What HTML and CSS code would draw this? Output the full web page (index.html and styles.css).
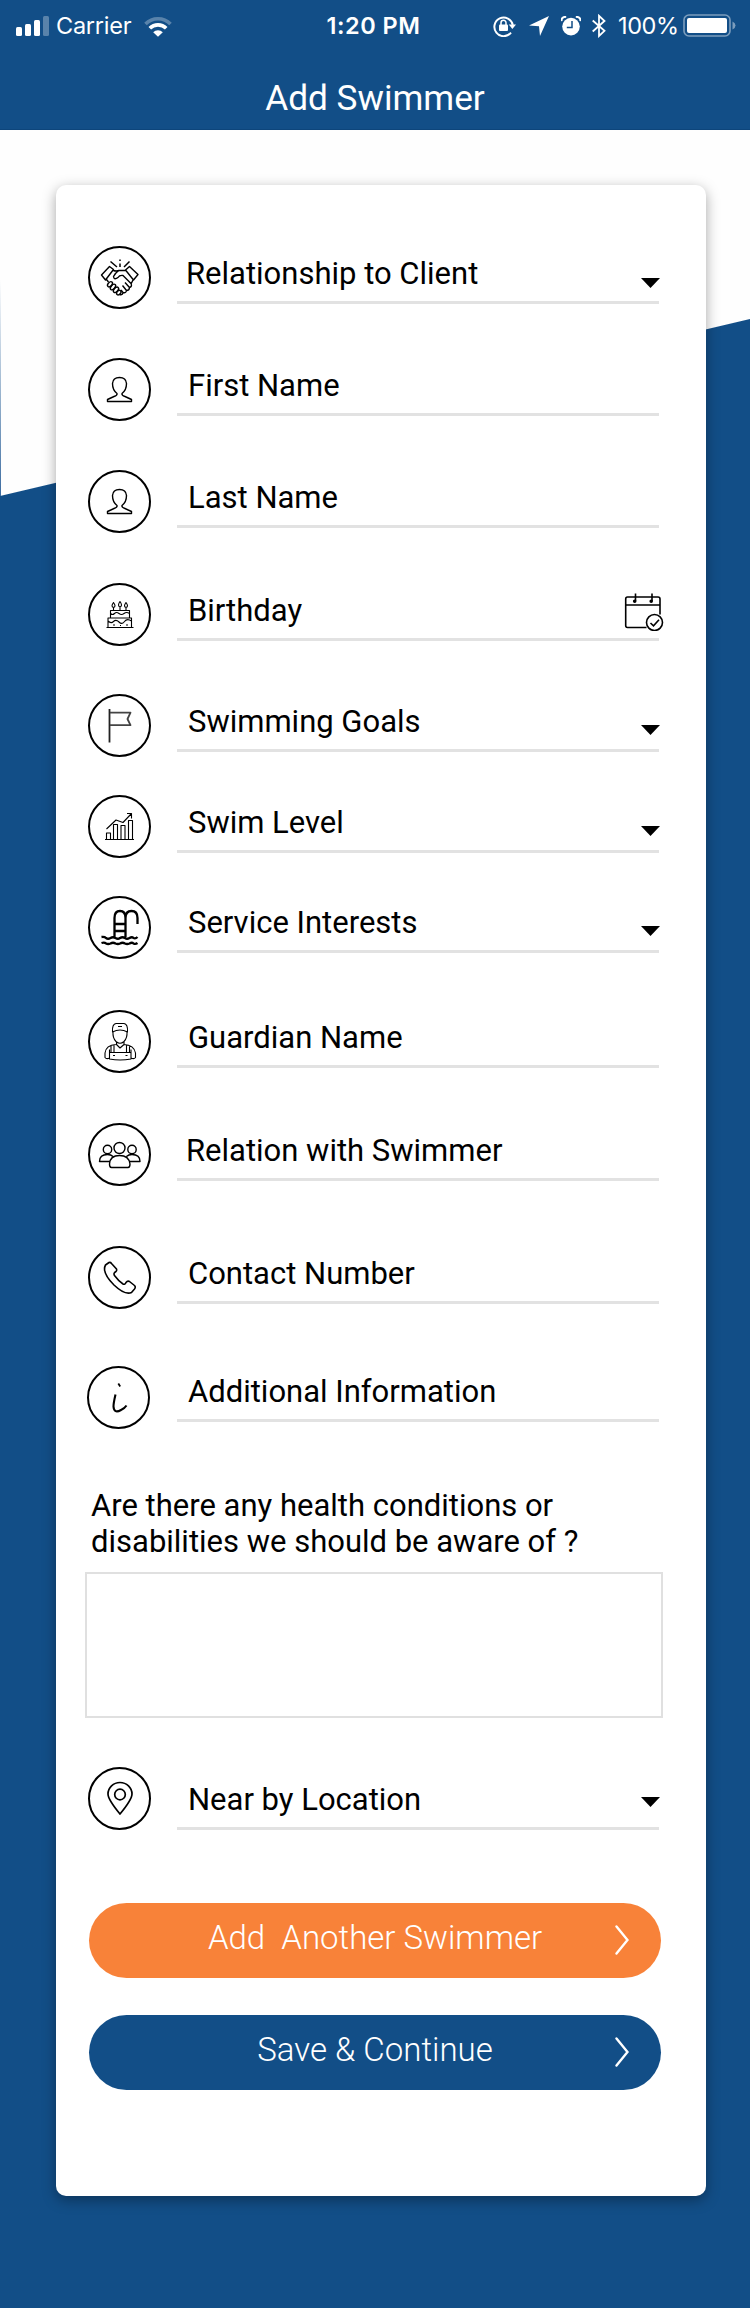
FILE: index.html
```html
<!DOCTYPE html>
<html lang="en">
<head>
<meta charset="utf-8">
<title>Add Swimmer</title>
<link rel="stylesheet" href="styles.css">
</head>
<body>
<div class="screen">
  <header class="header">
    <div class="status">
      <div class="status-left">
        <svg class="signal" width="34" height="20" viewBox="0 0 34 20" fill="#fff"><rect x="0" y="11" width="6" height="9" rx="1.5"/><rect x="9" y="8" width="6" height="12" rx="1.5"/><rect x="18" y="4" width="6" height="16" rx="1.5"/><rect x="27" y="0" width="6" height="20" rx="1.5" opacity=".3"/></svg>
        <span class="carrier">Carrier</span>
        <svg class="wifi" width="28" height="21" viewBox="0 0 28 21" fill="none" stroke="#fff" stroke-width="3.6"><path d="M1.5 8A17.5 17.5 0 0 1 26.500 8" opacity=".3"/><path d="M5.800 12.300A11.500 11.500 0 0 1 22.200 12.300"/><path d="M9.200 16.200A6.800 6.800 0 0 1 18.800 16.200L14 20.800Z" fill="#fff" stroke="none"/></svg>
      </div>
      <span class="clock">1:20 PM</span>
      <div class="status-right">
        <svg width="24" height="22" viewBox="0 0 24 22" fill="none" stroke="#fff" stroke-width="2"><path d="M18 17.600A9.300 9.300 0 1 1 19.800 10"/><path d="M15.800 9.500H23L19.400 14Z" fill="#fff" stroke="none"/><rect x="6" y="9.500" width="9" height="6.500" rx="1" fill="#fff" stroke="none"/><path d="M8 10V7.800a2.500 2.500 0 0 1 5 0V10" stroke-width="1.500"/></svg>
        <svg class="nav-arrow" width="20" height="20" viewBox="0 0 20 20" fill="#fff"><path d="M20 0L11 20L10 10.200L0 9.500Z"/></svg>
        <svg class="alarm" width="20" height="20" viewBox="0 0 20 20" fill="#fff"><circle cx="10" cy="10.600" r="8.800"/><path d="M.600 5.200Q0 1 5.200 .700M14.800 .700Q20 1 19.400 5.200" fill="none" stroke="#fff" stroke-width="2"/><path d="M11 5V11.400H5.800" fill="none" stroke="#124e87" stroke-width="1.500"/></svg>
        <svg class="bluetooth" width="14" height="24" viewBox="0 0 14 24" fill="none" stroke="#fff" stroke-width="1.800"><path d="M.700 6.500L12.500 16.800L7 22V1.800L12.500 7L.700 17.500"/></svg>
        <span class="percent">100%</span>
        <svg class="battery" width="53" height="24" viewBox="0 0 53 24"><rect x="1" y="1" width="46" height="21" rx="5" fill="none" stroke="#fff" stroke-width="1.600" opacity=".45"/><rect x="4" y="4" width="40" height="15" rx="2" fill="#fff"/><path d="M49.500 7.500Q52.500 9 52.500 11.500T49.500 15.500Z" fill="#fff" opacity=".45"/></svg>
      </div>
    </div>
    <h1 class="title">Add Swimmer</h1>
  </header>

  <main class="stage">
    <form class="card">
      <div class="row row-relationship">
        <span class="badge"><svg viewBox="0 0 63 63"><path d="M13.500 29L21.500 20.500L25.500 23.500L17.500 34ZM50 28.500L41.500 20.500L37.500 24L45.500 34ZM25.500 24.500Q28 25.500 31 24.500H37.500M18.500 33.500L20.500 36M45 34L43 38M31 24.500Q27.500 26.500 25.500 30.500Q26 34.500 30 31.500Q31.500 29 35 29.500L43 37.500Q44.500 40.500 41.500 41.500L37 36.500M41.500 41.500Q41.500 44.500 38.500 44.500L34.500 39.500M38.500 44.500Q38 47.500 35 46.500L33 44M35 47Q34 49.500 31.500 48.500"/><g><ellipse cx="22" cy="38.300" rx="1.900" ry="3" transform="rotate(42 22 38.300)"/><ellipse cx="25" cy="41" rx="1.900" ry="3.300" transform="rotate(42 25 41)"/><ellipse cx="28" cy="43.800" rx="1.900" ry="3.200" transform="rotate(42 28 43.800)"/><ellipse cx="30.800" cy="46.600" rx="1.800" ry="2.600" transform="rotate(42 30.800 46.600)"/></g><path d="M22.500 15.500L29 21M41.500 15.500L36 21M32 17.500V21M32 13.500V15" stroke-width="1.500"/></svg></span>
        <div class="field"><span class="label">Relationship to Client</span><i class="caret"></i></div>
      </div>
      <div class="row row-first">
        <span class="badge"><svg viewBox="0 0 63 63"><path d="M29 35.500Q24.500 32 24.500 25.500Q25 19.500 31.500 19.500T38.500 25.500Q38.500 32 34 35.500Q33.500 37.500 37 38.500L43.500 41.500V43.500H19.500V41.500L26 38.500Q29.500 37.500 29 35.500Z"/></svg></span>
        <div class="field"><span class="label">First Name</span></div>
      </div>
      <div class="row row-last">
        <span class="badge"><svg viewBox="0 0 63 63"><path d="M29 35.500Q24.500 32 24.500 25.500Q25 19.500 31.500 19.500T38.500 25.500Q38.500 32 34 35.500Q33.500 37.500 37 38.500L43.500 41.500V43.500H19.500V41.500L26 38.500Q29.500 37.500 29 35.500Z"/></svg></span>
        <div class="field"><span class="label">Last Name</span></div>
      </div>
      <div class="row row-birthday">
        <span class="badge"><svg class="thin" viewBox="0 0 63 63"><path d="M18.500 44.500H45.500M20 44V35H43.500V44M22.500 35V27.500H41.500V35M22.500 30.500Q24.500 32.500 26.500 30.500T31 30.500T36 30.500T41.500 30.500M20 38Q23 41 25.500 38.500T31 39T36.500 38.500T43.500 38M25.500 27V24.500M32 27V24M38 27V24.500M25.500 19.500Q22.500 23.500 25.500 24.500Q28.500 23.500 25.500 19.500ZM32 18.500Q29 22.500 32 24Q35 22.500 32 18.500ZM38 19.500Q35 23.500 38 24.500Q41 23.500 38 19.500Z"/><path d="M25 42H27M32 42.500H33M38 42H40"/></svg></span>
        <div class="field"><span class="label">Birthday</span>
          <svg class="calendar" width="40" height="38" viewBox="0 0 40 38" fill="none" stroke="#000" stroke-width="1.600"><path d="M22.500 34.500H3.500Q1.700 34.500 1.700 32.500V6Q1.700 4 3.500 4H34Q36 4 36 6V21.500M1.700 12H36M11.500 .500V8M28 .500V8"/><circle cx="10.700" cy="8.300" r="1" fill="#000"/><circle cx="27.200" cy="8.300" r="1" fill="#000"/><circle cx="30.500" cy="29.500" r="8"/><path d="M26.500 30L29.500 32.800L35 26.800"/></svg>
        </div>
      </div>
      <div class="row row-goals">
        <span class="badge"><svg class="medium" viewBox="0 0 63 63"><path d="M21.500 15V48.500" stroke="#222"/><path d="M22 18.700H42.500L39.500 25L42.500 31.200H22" stroke="#444"/></svg></span>
        <div class="field"><span class="label">Swimming Goals</span><i class="caret"></i></div>
      </div>
      <div class="row row-level">
        <span class="badge"><svg class="thin" viewBox="0 0 63 63"><path d="M17 44.500H46M18.500 44V38H22.500V44M25.500 44V29.500H29.500V44M33 44V30.500H37V44M40.500 44V25.500H44.500V44M18.500 34L28 25L35 27.500L43.500 18.500M39 18.500H43.500V23.500"/></svg></span>
        <div class="field"><span class="label">Swim Level</span><i class="caret"></i></div>
      </div>
      <div class="row row-service">
        <span class="badge"><svg class="bold" viewBox="0 0 63 63"><path d="M26.500 41V22Q26.500 15 32 15T37.500 22V41M37.500 22Q37.500 15 43.500 15T49.500 22V28M27 28H37.500M27 35H37.500M13.500 41Q16.500 40.500 18 42Q20 43.500 22.500 42Q25 40.500 27.500 42Q30 43.500 32 42Q34.500 40.500 37 42Q39 43.500 41.500 42Q44 40.500 45.500 42Q47.500 43 49.500 41M13.500 47Q16.500 46 18 47.500Q20 48.500 22.500 47.500Q25 46 27.500 47.500Q30 48.500 32 47.500Q34.500 46 37 47.500Q39 48.500 41.500 47.500Q44 46 45.500 47.500Q47.500 48.500 49.500 47"/></svg></span>
        <div class="field"><span class="label">Service Interests</span><i class="caret"></i></div>
      </div>
      <div class="row row-guardian">
        <span class="badge"><svg class="thin" viewBox="0 0 63 63"><path d="M24.500 22Q24 14 28 13.500H36Q40 14 39.500 22Q32 18 24.500 22ZM30 16.500H34M25 21.500Q24.500 28 28 31.500Q32 35 36 31.500Q39.500 28 39 21.500M28.500 32V34.500L32 38L36 34.500V32M28 34.500Q18 35 17 43V47.500Q18.500 49.500 21.500 48M36 34.500Q46 35 47.500 43V47.500Q46 49.500 43 48M21.500 49V42.500H43V49Q32 51 21.500 49ZM23 42V35.500M26 42V35M38.500 42V35M41.500 42V35.500M21.500 42.500V39.500M43 42.500V39.500M25 45.500H27M37.500 45.500H39.500"/></svg></span>
        <div class="field"><span class="label">Guardian Name</span></div>
      </div>
      <div class="row row-relation">
        <span class="badge"><svg viewBox="0 0 63 63"><circle cx="31.500" cy="25" r="5.500"/><circle cx="19.500" cy="26.500" r="4.200"/><circle cx="44" cy="26.500" r="4.200"/><path d="M21.500 41Q22 32.500 31.500 32.500T42 41Q42 44.500 40 44.500H23.500Q21.500 44.500 21.500 41ZM21.500 38.500H11.500Q11.500 31.500 19.500 31.500Q23 31.500 25 33.500M42 38.500H52Q52 31.500 44 31.500Q40.500 31.500 38.500 33.500"/></svg></span>
        <div class="field"><span class="label">Relation with Swimmer</span></div>
      </div>
      <div class="row row-contact">
        <span class="badge"><svg viewBox="0 0 63 63"><path d="M17.500 19L21 16.500Q22.500 16 23.500 17.500L28.500 23Q29 24.500 28 25.500Q25 27 26.500 29.500Q30.500 35 35 38Q37 39 38 36.500Q39.500 34.500 41.500 35.500L46.500 39.500Q48 41 46.500 43L43.500 46.500Q37 49.500 26 39Q13.500 26.500 17.500 19Z" stroke-width="1.600"/></svg></span>
        <div class="field"><span class="label">Contact Number</span></div>
      </div>
      <div class="row row-info">
        <span class="badge"><svg viewBox="0 0 63 63"><path d="M28.500 28.500Q26.500 37 26.500 40.500Q27 48 34 44Q37.500 42.500 39.500 39.500" stroke-width="2.100"/><path d="M31.500 19.500L33 18.500" stroke-width="3.400"/></svg></span>
        <div class="field"><span class="label">Additional Information</span></div>
      </div>

      <label class="question" for="health">Are there any health conditions or<br>disabilities we should be aware of ?</label>
      <textarea class="answer" id="health"></textarea>

      <div class="row row-location">
        <span class="badge"><svg viewBox="0 0 63 63"><path d="M32 47Q20 32.500 20 27A12 11.500 0 0 1 44 27Q44 32.500 32 47Z" stroke-width="1.700"/><circle cx="32" cy="27.500" r="5.300" stroke-width="1.700"/></svg></span>
        <div class="field"><span class="label">Near by Location</span><i class="caret"></i></div>
      </div>

      <button class="btn btn-add" type="button"><span class="btn-text">Add  Another Swimmer</span><svg class="chevron" width="14" height="30" viewBox="0 0 14 30"><path d="M1.500 1.500L12.500 15L1.500 28.500"/></svg></button>
      <button class="btn btn-save" type="button"><span class="btn-text">Save &amp; Continue</span><svg class="chevron" width="14" height="30" viewBox="0 0 14 30"><path d="M1.500 1.500L12.500 15L1.500 28.500"/></svg></button>
    </form>
  </main>
</div>
</body>
</html>
```
FILE: styles.css
```css
* { box-sizing: border-box; }
body { margin: 0; font-family: Roboto, "Liberation Sans", sans-serif; color: #000; background: #fefefe; }
.screen { width: 750px; height: 2308px; overflow: hidden; }

.header { height: 130px; background: #124e87; color: #fff; border-bottom: 1px solid #0d457b; }
.status { display: grid; grid-template-columns: 1fr auto 1fr; height: 51px; padding: 1px 14px 0 16px; align-items: center; font: 23.500px/50px Inter, "Liberation Sans", sans-serif; }
.status-left, .status-right { display: flex; align-items: center; }
.signal { margin-right: 6px; }
.carrier { letter-spacing: -.25px; }
.wifi { margin-left: 13px; }
.clock { margin-left: -5px; font-weight: 600; letter-spacing: .5px; }
.status-right { justify-content: flex-end; }
.nav-arrow { margin-left: 12px; }
.alarm { margin-left: 12px; }
.bluetooth { margin-left: 11px; }
.percent { width: 59px; margin-left: 12px; letter-spacing: -.4px; }
.battery { margin-left: 6px; }
.title { margin: 0; padding-top: 26px; font-weight: 400; font-size: 35.200px; line-height: 42px; text-align: center; }

.stage { height: 2178px; padding: 55px 44px 112px 56px; background: linear-gradient(#124e87, #124e87) 0 366px / 100% 100% no-repeat, linear-gradient(#fefefe, #8ba9c7 60%, #3b6ba0) 0 150px / 1px 216px no-repeat, linear-gradient(to bottom right, transparent calc(50% - .5px), #124e87 calc(50% + .5px)) 0 189px / 750px 177px no-repeat, #fefefe; }
.card { display: flex; flex-direction: column; width: 650px; height: 2011px; padding: 61px 45px 0 32px; background: #fff; border-radius: 10px; box-shadow: 0 4px 14px rgba(0, 0, 0, .35); }

.row { display: flex; flex: none; height: 63px; }
.badge { flex: none; width: 63px; height: 63px; border: 2px solid #000; border-radius: 50%; }
.badge svg { display: block; width: 63px; height: 63px; margin: -2px; fill: none; stroke: #000; stroke-width: 1.400; stroke-linejoin: round; }
.badge .thin { stroke-width: 1.100; }
.badge .medium { stroke-width: 1.800; }
.badge .bold { stroke-width: 2.300; }
.field { display: flex; justify-content: space-between; width: 482px; height: 58px; margin-left: 26px; padding: 10px 0 0 11px; border-bottom: 3px solid #e2e2e2; }
.label { font-size: 31px; line-height: 35px; white-space: nowrap; }
.caret { width: 19px; height: 10px; margin: 21px -1px 0 0; background: #000; clip-path: polygon(0 0, 100% 0, 50% 100%); }
.calendar { margin: 0 -5px 0 0; }

.row-relationship .field, .row-relation .field { padding-left: 9px; }
.row-relationship .caret { margin-top: 22px; }
.row-first { margin-top: 49px; }
.row-last { margin-top: 49px; }
.row-birthday { margin-top: 50px; }
.row-goals { margin-top: 48px; }
.row-level { margin-top: 38px; }
.row-service { margin-top: 38px; }
.row-guardian { margin-top: 51px; }
.row-relation { margin-top: 50px; }
.row-contact { margin-top: 60px; }
.row-info { margin-top: 57px; }
.row-service .field { height: 57px; padding-top: 9px; }
.row-info .badge { margin: 0 1px 0 -1px; }
.row-info .field { height: 56px; padding-top: 8px; }
.row-location { margin-top: 49px; }
.row-location .field { height: 63px; padding-top: 15px; }
.row-location .caret { margin-top: 15px; }

.question { display: block; margin: 59px 0 0 3px; font-size: 31px; line-height: 36px; white-space: nowrap; }
.answer { display: block; width: 578px; height: 146px; margin: 12px 0 0 -3px; border: 2px solid #e0e0e0; background: #fff; resize: none; }

.btn { position: relative; flex: none; width: 572px; height: 75px; margin: 73px 0 0 1px; padding: 0; border: 0; border-radius: 38px; color: #fff; font: 300 33px/38px Roboto, "Liberation Sans", sans-serif; }
.btn-add { background: #f88239; }
.btn-save { margin-top: 37px; background: #124e87; }
.btn-text { display: block; white-space: pre; padding-bottom: 5px; }
.chevron { position: absolute; right: 32px; top: 22px; fill: none; stroke: #fff; stroke-width: 2.400; stroke-linecap: round; }
```
